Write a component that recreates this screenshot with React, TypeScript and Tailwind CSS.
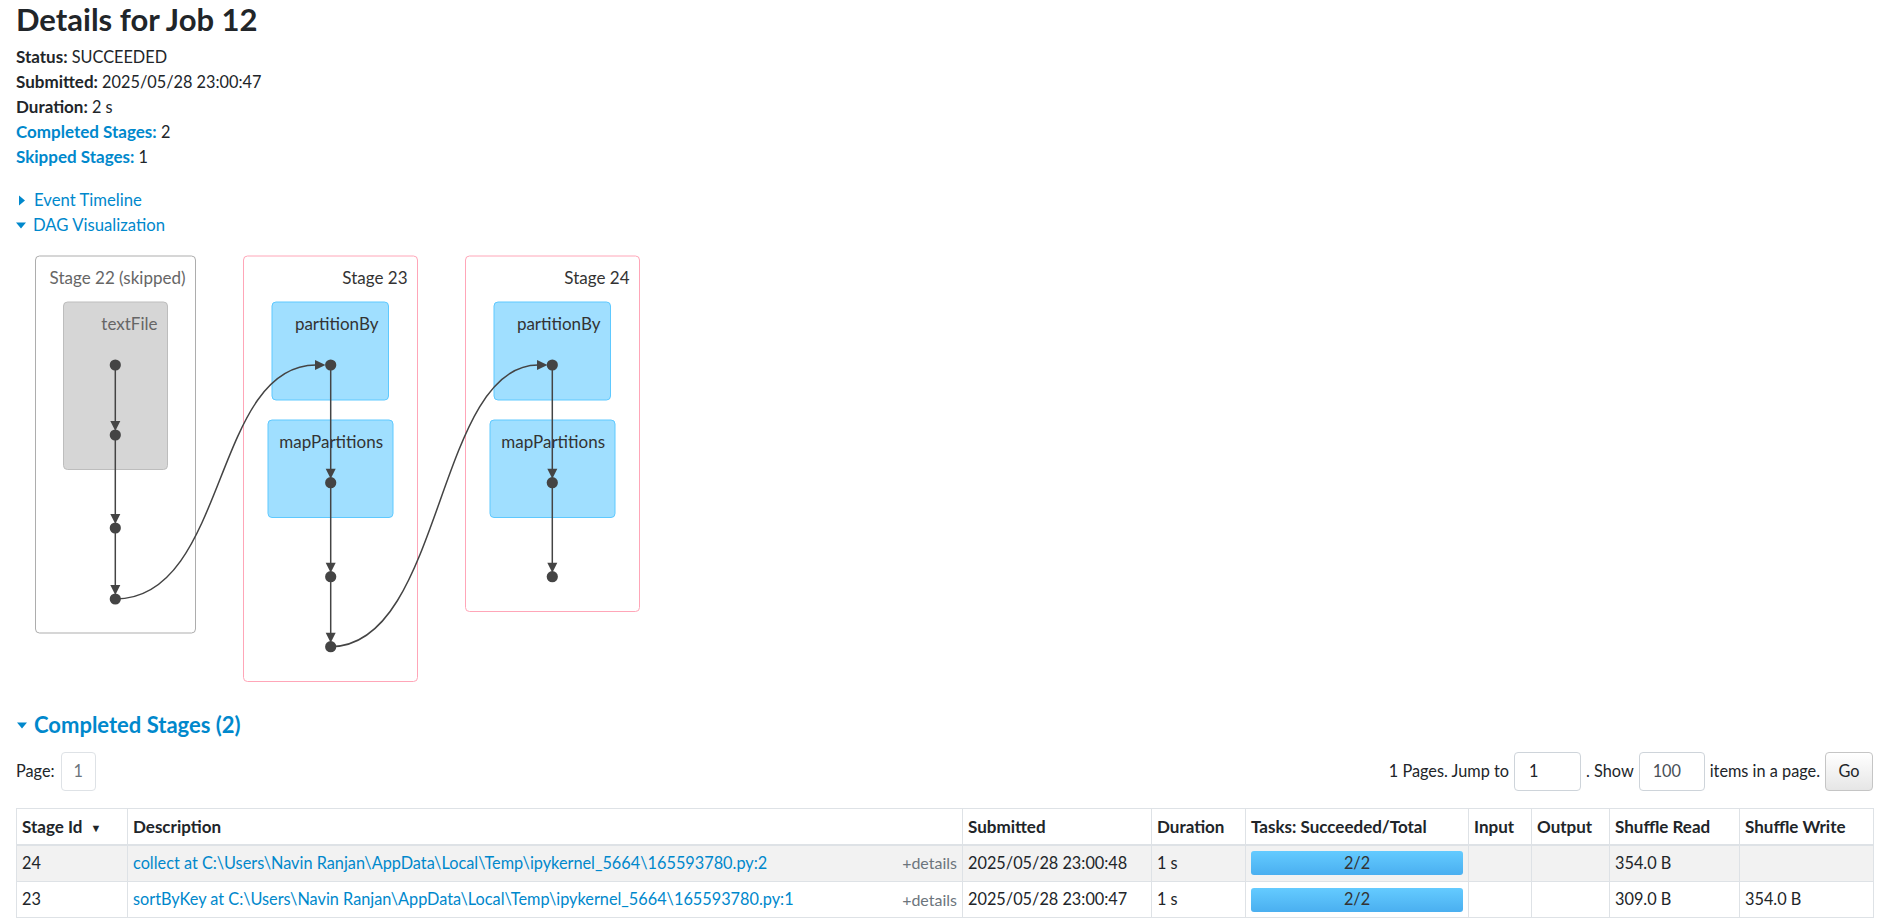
import React from "react";

interface StageRow {
	id: number;
	description: string;
	submitted: string;
	duration: string;
	tasks: string;
	input: string;
	output: string;
	shuffleRead: string;
	shuffleWrite: string;
}

const stages: StageRow[] = [
	{
		id: 24,
		description:
			"collect at C:\\Users\\Navin Ranjan\\AppData\\Local\\Temp\\ipykernel_5664\\165593780.py:2",
		submitted: "2025/05/28 23:00:48",
		duration: "1 s",
		tasks: "2/2",
		input: "",
		output: "",
		shuffleRead: "354.0 B",
		shuffleWrite: "",
	},
	{
		id: 23,
		description:
			"sortByKey at C:\\Users\\Navin Ranjan\\AppData\\Local\\Temp\\ipykernel_5664\\165593780.py:1",
		submitted: "2025/05/28 23:00:47",
		duration: "1 s",
		tasks: "2/2",
		input: "",
		output: "",
		shuffleRead: "309.0 B",
		shuffleWrite: "354.0 B",
	},
];

function CaretRight() {
	return (
		<svg width="8" height="11" viewBox="0 0 8 11" className="shrink-0">
			<path d="M1 0.5 L7 5.5 L1 10.5 Z" fill="#0088cc" />
		</svg>
	);
}

function CaretDown() {
	return (
		<svg width="10" height="7" viewBox="0 0 10 7" className="shrink-0">
			<path d="M0 0.5 L10 0.5 L5 6.5 Z" fill="#0088cc" />
		</svg>
	);
}

// page coordinates, shifted by the svg origin
const OX = 16;
const OY = 240;

function Node({ x, y }: { x: number; y: number }) {
	return <circle cx={x} cy={y} r={5.6} fill="#444444" />;
}

function Arrow({ x, y1, y2 }: { x: number; y1: number; y2: number }) {
	// vertical edge, arrowhead touching the lower node
	const tip = y2 - 4;
	return (
		<g>
			<path d={`M${x} ${y1} L${x} ${tip - 8}`} stroke="#444444" strokeWidth={1.5} />
			<path d={`M${x - 5} ${tip - 10} L${x + 5} ${tip - 10} L${x} ${tip} Z`} fill="#444444" />
		</g>
	);
}

function DagViz() {
	const c22 = 115.3;
	const c23 = 330.7;
	const c24 = 552.3;
	return (
		<svg width="660" height="460" className="block">
			<g transform={`translate(${-OX} ${-OY})`} fontFamily="Lato, sans-serif" fontSize="17">
				{/* Stage 22 (skipped) */}
				<rect x={35.5} y={256} width={160} height={377} rx={4} fill="#fff" stroke="#adadad" />
				<text x={185.5} y={284} textAnchor="end" fill="#666666">
					Stage 22 (skipped)
				</text>
				<rect x={63.5} y={302} width={104} height={167.5} rx={4} fill="#d6d6d6" stroke="#bdbdbd" />
				<text x={157.5} y={330} textAnchor="end" fill="#666666">
					textFile
				</text>

				{/* Stage 23 */}
				<rect x={243.5} y={256} width={174} height={425.5} rx={4} fill="#fff" stroke="#ffa6b8" />
				<text x={407.5} y={284} textAnchor="end" fill="#333333">
					Stage 23
				</text>
				<rect x={272} y={302} width={116.5} height={98} rx={4} fill="#a0dfff" stroke="#5ec9ff" />
				<text x={378.5} y={330} textAnchor="end" fill="#333333">
					partitionBy
				</text>
				<rect x={268} y={420} width={125} height={97.5} rx={4} fill="#a0dfff" stroke="#5ec9ff" />
				<text x={383} y={448} textAnchor="end" fill="#333333">
					mapPartitions
				</text>

				{/* Stage 24 */}
				<rect x={465.5} y={256} width={174} height={355.5} rx={4} fill="#fff" stroke="#ffa6b8" />
				<text x={629.5} y={284} textAnchor="end" fill="#333333">
					Stage 24
				</text>
				<rect x={494} y={302} width={116.5} height={98} rx={4} fill="#a0dfff" stroke="#5ec9ff" />
				<text x={600.5} y={330} textAnchor="end" fill="#333333">
					partitionBy
				</text>
				<rect x={490} y={420} width={125} height={97.5} rx={4} fill="#a0dfff" stroke="#5ec9ff" />
				<text x={605} y={448} textAnchor="end" fill="#333333">
					mapPartitions
				</text>

				{/* edges inside stages */}
				<Arrow x={c22} y1={365} y2={435} />
				<Arrow x={c22} y1={435} y2={528} />
				<Arrow x={c22} y1={528} y2={599} />
				<Arrow x={c23} y1={365} y2={482.7} />
				<Arrow x={c23} y1={482.7} y2={576.7} />
				<Arrow x={c23} y1={576.7} y2={646.7} />
				<Arrow x={c24} y1={365} y2={482.7} />
				<Arrow x={c24} y1={482.7} y2={576.7} />

				{/* cross-stage edges */}
				<path
					d={`M${c22} 599 C228 599 212 365 316 365`}
					fill="none"
					stroke="#444444"
					strokeWidth={1.5}
				/>
				<path d="M315 360 L325.5 365 L315 370 Z" fill="#444444" />
				<path
					d={`M${c23} 646.7 C443 646.7 436 365 538 365`}
					fill="none"
					stroke="#444444"
					strokeWidth={1.5}
				/>
				<path d="M537 360 L547.5 365 L537 370 Z" fill="#444444" />

				{/* nodes */}
				<Node x={c22} y={365} />
				<Node x={c22} y={435} />
				<Node x={c22} y={528} />
				<Node x={c22} y={599} />
				<Node x={c23} y={365} />
				<Node x={c23} y={482.7} />
				<Node x={c23} y={576.7} />
				<Node x={c23} y={646.7} />
				<Node x={c24} y={365} />
				<Node x={c24} y={482.7} />
				<Node x={c24} y={576.7} />
			</g>
		</svg>
	);
}

const th = "border border-[#dee2e6] border-b-2 px-[5px] text-left align-middle text-[17px] font-bold";
const td = "border border-[#dee2e6] px-[5px] align-middle";

export default function App() {
	return (
		<div className="min-h-[923px] bg-white pl-[16px] pr-[8px] font-[Lato,sans-serif] text-[16.3px] text-[#212529]">
			<h3 className="text-[31px] font-bold leading-[38px]">Details for Job 12</h3>

			{/* resumo do job */}
			<ul className="mt-[6px] leading-[25px]">
				<li>
					<strong className="text-[17px]">Status:</strong> SUCCEEDED
				</li>
				<li>
					<strong className="text-[17px]">Submitted:</strong> 2025/05/28 23:00:47
				</li>
				<li>
					<strong className="text-[17px]">Duration:</strong> 2 s
				</li>
				<li>
					<a className="text-[17px] font-bold text-[#0088cc]">Completed Stages:</a> 2
				</li>
				<li>
					<a className="text-[17px] font-bold text-[#0088cc]">Skipped Stages:</a> 1
				</li>
			</ul>

			<div className="mt-[19px] text-[16.7px] leading-[25px] text-[#0088cc]">
				<div className="flex items-center gap-[8px] pl-[2px]">
					<CaretRight />
					<span>Event Timeline</span>
				</div>
				<div className="flex items-center gap-[7px]">
					<CaretDown />
					<span>DAG Visualization</span>
				</div>
			</div>

			<div className="mt-[2px]">
				<DagViz />
			</div>

			{/* tabela de stages */}
			<div className="mt-[10px] flex items-center gap-[7px] pl-[1px] text-[22px] font-bold leading-[30px] text-[#0088cc]">
				<CaretDown />
				<span>Completed Stages (2)</span>
			</div>

			<div className="mt-[12px] flex h-[39px] items-center justify-between">
				<div className="flex items-center gap-[6px]">
					<span>Page:</span>
					<span className="flex h-[39px] w-[35px] items-center justify-center rounded-[4px] border border-[#dee2e6] text-[#6c757d]">
						1
					</span>
				</div>
				<div className="flex items-center">
					<span>1 Pages. Jump to</span>
					<span className="ml-[5px] flex h-[39px] w-[67px] items-center rounded-[4px] border border-[#ced4da] pl-[14px]">
						1
					</span>
					<span className="ml-[5px]">. Show</span>
					<span className="ml-[5px] flex h-[39px] w-[66px] items-center rounded-[4px] border border-[#ced4da] pl-[13px] text-[#495057]">
						100
					</span>
					<span className="ml-[5px]">items in a page.</span>
					<button
						type="button"
						className="ml-[5px] h-[39px] w-[48px] rounded-[4px] border border-[#c5c5c5] bg-gradient-to-b from-white to-[#e6e6e6]"
					>
						Go
					</button>
				</div>
			</div>

			<table className="mt-[17px] w-[1857px] table-fixed border-collapse">
				<colgroup>
					<col className="w-[111px]" />
					<col className="w-[835px]" />
					<col className="w-[189px]" />
					<col className="w-[94px]" />
					<col className="w-[223px]" />
					<col className="w-[63px]" />
					<col className="w-[78px]" />
					<col className="w-[130px]" />
					<col className="w-[134px]" />
				</colgroup>
				<thead>
					<tr className="h-[36px]">
						<th className={th}>
							Stage Id <span className="ml-[4px] align-middle text-[11px]">▼</span>
						</th>
						<th className={th}>Description</th>
						<th className={th}>Submitted</th>
						<th className={th}>Duration</th>
						<th className={th}>Tasks: Succeeded/Total</th>
						<th className={th}>Input</th>
						<th className={th}>Output</th>
						<th className={th}>Shuffle Read</th>
						<th className={th}>Shuffle Write</th>
					</tr>
				</thead>
				<tbody>
					{stages.map((s, i) => (
						<tr key={s.id} className={i % 2 === 0 ? "h-[37px] bg-[#f2f2f2]" : "h-[36px] bg-white"}>
							<td className={td}>{s.id}</td>
							<td className={td}>
								<div className="flex items-center justify-between">
									<a className="whitespace-nowrap text-[#0088cc]">{s.description}</a>
									<span className="text-[16px] text-[#6c757d]">+details</span>
								</div>
							</td>
							<td className={td}>{s.submitted}</td>
							<td className={td}>{s.duration}</td>
							<td className={td}>
								<div className="flex h-[24px] items-center justify-center rounded-[3px] bg-gradient-to-b from-[#64cbff] to-[#4aaff0] text-[#333]">
									{s.tasks}
								</div>
							</td>
							<td className={td}>{s.input}</td>
							<td className={td}>{s.output}</td>
							<td className={td}>{s.shuffleRead}</td>
							<td className={td}>{s.shuffleWrite}</td>
						</tr>
					))}
				</tbody>
			</table>
		</div>
	);
}
